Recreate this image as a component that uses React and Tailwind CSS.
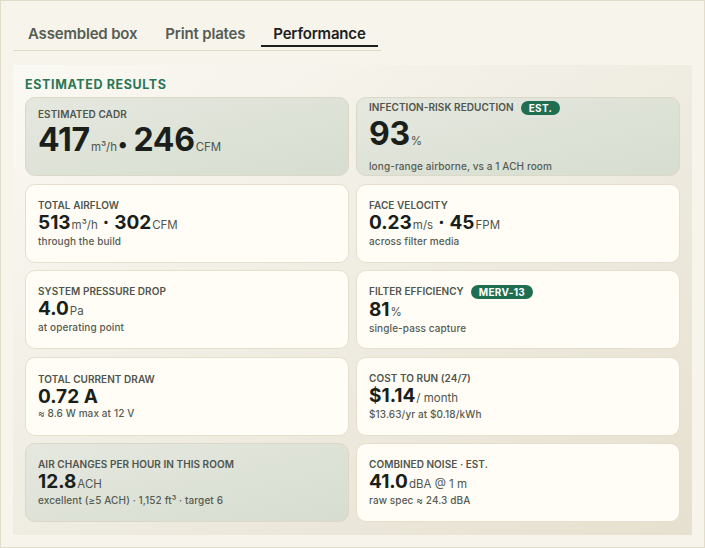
import { useState } from 'react';

const tabs = ['Assembled box', 'Print plates', 'Performance'];

const cards = [
    { label: 'Estimated CADR', big: true, tint: true, value: [['417', 'm³/h'], ['246', 'CFM']] },
    { label: 'Infection-risk reduction', badge: 'EST.', big: true, tint: true, value: [['93', '%']], sub: 'long-range airborne, vs a 1 ACH room' },
    { label: 'Total airflow', value: [['513', 'm³/h'], ['302', 'CFM']], sub: 'through the build' },
    { label: 'Face velocity', value: [['0.23', 'm/s'], ['45', 'FPM']], sub: 'across filter media' },
    { label: 'System pressure drop', value: [['4.0', 'Pa']], sub: 'at operating point' },
    { label: 'Filter efficiency', badge: 'MERV-13', value: [['81', '%']], sub: 'single-pass capture' },
    { label: 'Total current draw', value: [['0.72 A', '']], sub: '≈ 8.6 W max at 12 V' },
    { label: 'Cost to run (24/7)', value: [['$1.14', '/ month']], sub: '$13.63/yr at $0.18/kWh' },
    { label: 'Air changes per hour in this room', tint: true, value: [['12.8', 'ACH']], sub: 'excellent (≥5 ACH) · 1,152 ft³ · target 6' },
    { label: 'Combined noise · est.', value: [['41.0', 'dBA @ 1 m']], sub: 'raw spec ≈ 24.3 dBA' },
];

function Card({ item }) {
    return (
        <div
            className={`flex flex-col justify-center rounded-[10px] border px-[12px] ${item.tint
                ? 'border-[#dcd7c6] bg-gradient-to-br from-[#e5e8df] to-[#d7ddd0]'
                : 'border-[#e6dfcd] bg-[#fffdf6]'
                }`}
        >
            <div className="flex items-center gap-[7px]">
                <span className="text-[10px] font-semibold uppercase tracking-[0.005em] text-[#50554d] leading-[13px]">{item.label}</span>
                {item.badge && (
                    <span className="rounded-full bg-[#1f6e52] px-[8px] text-[10px] font-bold leading-[14px] tracking-[0.03em] text-white">{item.badge}</span>
                )}
            </div>
            <div className={`flex items-baseline text-[#1a1f1b] font-bold ${item.big ? 'leading-[38px]' : 'mt-[1px] leading-[20px]'}`}>
                {item.value.map(([num, unit], i) => (
                    <span key={i} className="flex items-baseline">
                        {i > 0 && (item.big
                            ? <span className="text-[20px] ml-[1px] mr-[6px]">•</span>
                            : <span className="text-[19px] mx-[5px]">·</span>)}
                        <span className={item.big ? 'text-[32px] tracking-[-0.01em]' : 'text-[19px]'}>{num}</span>
                        {unit && <span className="ml-[1px] text-[11.5px] font-normal text-[#4f554e]">{unit}</span>}
                    </span>
                ))}
            </div>
            {item.sub && (
                <div className="text-[10px] font-medium leading-[13px] tracking-[0.01em] text-[#565b53]">{item.sub}</div>
            )}
        </div>
    );
}

export default function App() {
    const [active, setActive] = useState('Performance');

    return (
        <div className="h-[548px] w-[705px] border border-[#e2dccb] bg-[#f7f4ec] px-3 pt-[23px] font-['Inter',sans-serif]">
            {/* Tabs */}
            <div className="flex w-fit gap-[4px] border-b border-[#e0d9c6] px-[3px] pb-[3px]">
                {tabs.map((t) => (
                    <button
                        key={t}
                        onClick={() => setActive(t)}
                        className={`whitespace-nowrap border-b-2 px-3 pb-[1px] text-[15px] leading-[20px] font-semibold tracking-[-0.012em] ${t === active
                            ? 'border-[#1c211d] text-[#1c211d]'
                            : 'border-transparent text-[#565c53]'
                            }`}
                    >
                        {t}
                    </button>
                ))}
            </div>

            {/* Results panel */}
            <div className="mt-[14px] flex h-[470px] flex-col bg-gradient-to-br from-[#fbf9f3] via-[#efece2] to-[#e6e0cf] px-3 pt-[12px] pb-[13px]">
                <div className="mb-[4px] text-[12.5px] font-bold uppercase leading-[16px] tracking-[0.05em] text-[#2a7658]">Estimated results</div>
                <div className="grid flex-1 grid-cols-2 grid-rows-5 gap-x-[7px] gap-y-[7.5px]">
                    {cards.map((c, i) => <Card key={i} item={c} />)}
                </div>
            </div>
        </div>
    );
}
